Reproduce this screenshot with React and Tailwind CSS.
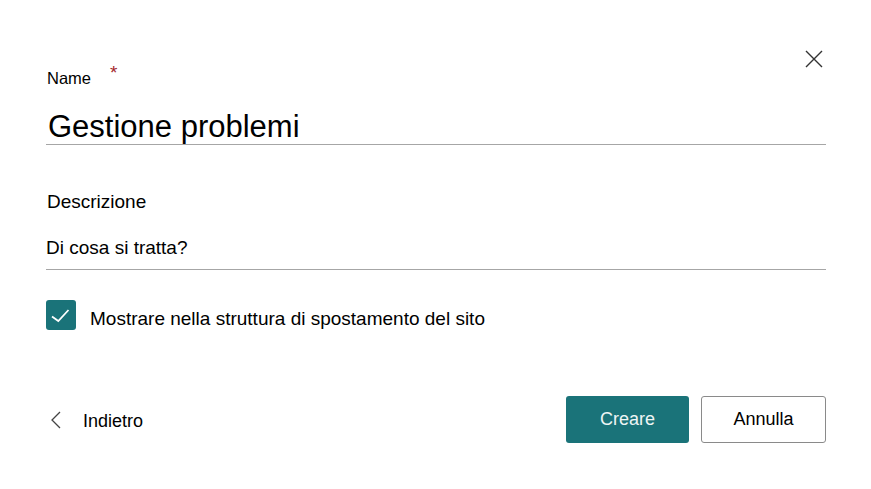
import { useState } from 'react'

export default function App() {
    const [name, setName] = useState('Gestione problemi')
    const [desc, setDesc] = useState('')
    const [showInNav, setShowInNav] = useState(true)

    return (
        <div className="relative h-[489px] w-[871px] bg-white pl-[46px] pr-[45px] text-black font-['Liberation_Sans',Arial,sans-serif]">
            {/* close */}
            <button className="absolute right-[48px] top-[50px] h-[18px] w-[18px] text-[#333]" aria-label="Chiudi">
                <svg viewBox="0 0 18 18" width="18" height="18" fill="none" stroke="currentColor" strokeWidth="1.4">
                    <path d="M1 1 L17 17 M17 1 L1 17" />
                </svg>
            </button>

            <div className="pt-[68px] flex items-start text-[16.5px] leading-[20px]">
                <span className="pl-px">Name</span>
                <span className="ml-[19px] -mt-[5px] text-[19px] text-[#a4262c]">*</span>
            </div>

            <div className="mt-[21px] border-b border-[#a6a6a6] pl-[2px]">
                <input
                    value={name}
                    onChange={(e) => setName(e.target.value)}
                    className="w-full bg-transparent text-[31px] leading-[35px] outline-none"
                />
            </div>

            <div className="mt-[45px] pl-px text-[19px] leading-[24px]">Descrizione</div>

            <div className="mt-[22px] border-b border-[#a6a6a6] pb-[8px]">
                <input
                    value={desc}
                    onChange={(e) => setDesc(e.target.value)}
                    placeholder="Di cosa si tratta?"
                    className="w-full bg-transparent text-[19px] leading-[24px] outline-none placeholder:text-black"
                />
            </div>

            <label className="mt-[30px] flex items-start gap-[14px] cursor-pointer">
                <button
                    onClick={() => setShowInNav(!showInNav)}
                    className={`flex h-[30px] w-[30px] items-center justify-center rounded-[3px] ${showInNav ? 'bg-[#1a7379]' : 'border border-[#666] bg-white'}`}
                >
                    {showInNav && (
                        <svg viewBox="0 0 30 30" width="30" height="30" fill="none" stroke="white" strokeWidth="1.8">
                            <path d="M6 16.5 L12.3 21 L22.5 10" />
                        </svg>
                    )}
                </button>
                <span className="mt-[7px] text-[19px] leading-[24px]">Mostrare nella struttura di spostamento del sito</span>
            </label>

            <div className="mt-[65px] flex items-center justify-between">
                <button className="flex items-center text-[18px] leading-[24px]">
                    <svg viewBox="0 0 12 18" width="12" height="18" fill="none" stroke="#444" strokeWidth="1.3" className="ml-[4px]">
                        <path d="M10 1 L2 9 L10 17" />
                    </svg>
                    <span className="ml-[21px] mt-[2px]">Indietro</span>
                </button>
                <div className="flex gap-[12px]">
                    <button className="h-[47px] w-[123px] rounded-[3px] bg-[#1a7379] text-[18px] text-[#eef5f5]">Creare</button>
                    <button className="h-[47px] w-[125px] rounded-[3px] border border-[#8a8a8a] bg-white text-[18px]">Annulla</button>
                </div>
            </div>
        </div>
    )
}
